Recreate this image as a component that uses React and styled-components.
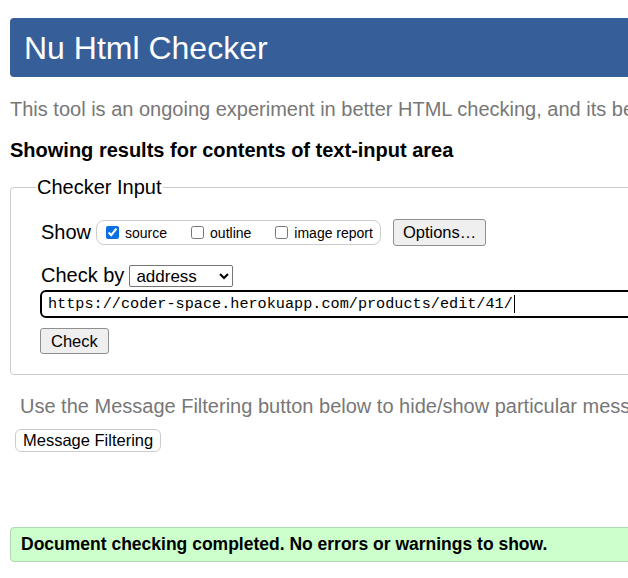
import styled, { createGlobalStyle } from 'styled-components'

const Global = createGlobalStyle`
  html, body {
    margin: 0;
    padding: 0;
    overflow: hidden;
    background: #fff;
  }
  body {
    font-family: "Liberation Sans", Arial, sans-serif;
    color: #000;
  }
`

function App() {
  return (
    <Page>
      <Global />
      <Header>
        <Title>Nu Html Checker</Title>
      </Header>

      <Intro>
        This tool is an ongoing experiment in better HTML checking, and its behavior remains subject to change
      </Intro>

      <Heading>Showing results for contents of text-input area</Heading>

      <Fieldset>
        <Legend>Checker Input</Legend>

        <Row>
          <RowLabel>Show</RowLabel>
          <CheckGroup>
            <CheckItem>
              <input type="checkbox" defaultChecked /> source
            </CheckItem>
            <CheckItem>
              <input type="checkbox" /> outline
            </CheckItem>
            <CheckItem>
              <input type="checkbox" /> image report
            </CheckItem>
          </CheckGroup>
          <Button>Options…</Button>
        </Row>

        <Row $top={18}>
          <RowLabel>Check by</RowLabel>
          <Select defaultValue="address">
            <option value="address">address</option>
            <option value="file">file upload</option>
            <option value="text">text input</option>
          </Select>
        </Row>

        <UrlField>
          https://coder-space.herokuapp.com/products/edit/41/
          <Caret />
        </UrlField>

        <CheckButton>Check</CheckButton>
      </Fieldset>

      <Note>
        Use the Message Filtering button below to hide/show particular messages, and to see total counts of errors and warnings.
      </Note>

      <FilterButton>Message Filtering</FilterButton>

      <Success>Document checking completed. No errors or warnings to show.</Success>
    </Page>
  )
}

const Page = styled.div`
  width: 1100px;
  padding: 18px 0 0 10px;
`

const Header = styled.div`
  height: 59px;
  display: flex;
  align-items: center;
  padding-left: 14px;
  background-color: #365e99;
  border-radius: 4px;
`

const Title = styled.h1`
  margin: 0;
  font-size: 32px;
  font-weight: normal;
  color: #fff;
  line-height: 1;
`

const Intro = styled.p`
  margin: 21px 0 0;
  font-size: 20px;
  line-height: 23px;
  color: #777;
  white-space: nowrap;
`

const Heading = styled.h2`
  margin: 18px 0 0;
  font-size: 20px;
  line-height: 23px;
  font-weight: bold;
`

const Fieldset = styled.fieldset`
  margin: 14px 0 0;
  padding: 21px 0 20px 30px;
  border: 1px solid #ccc;
  border-radius: 4px;
`

const Legend = styled.legend`
  margin-left: -5px;
  padding: 0 1px;
  font-size: 20px;
  line-height: 22px;
`

const Row = styled.div`
  display: flex;
  align-items: center;
  margin-top: ${p => p.$top || 0}px;
`

const RowLabel = styled.span`
  font-size: 20px;
  line-height: 23px;
  margin-right: 5px;
`

const CheckGroup = styled.div`
  display: flex;
  align-items: center;
  gap: 20px;
  height: 23px;
  padding: 0 7px 0 5px;
  border: 1px solid #ccc;
  border-radius: 8px;
  margin-right: 12px;
`

const CheckItem = styled.label`
  display: flex;
  align-items: center;
  font-size: 14px;
  gap: 3px;

  input {
    margin: 0 3px 0 4px;
    width: 13px;
    height: 13px;
    accent-color: #0a6fe0;
  }
`

const Button = styled.button`
  height: 27px;
  padding: 0 9px;
  font-family: "Liberation Sans", Arial, sans-serif;
  font-size: 16.5px;
  color: #000;
  background: #efefef;
  border: 1px solid #8f8f8f;
  border-radius: 3px;
`

const Select = styled.select`
  width: 104px;
  height: 22px;
  font-family: "Liberation Sans", Arial, sans-serif;
  font-size: 17px;
  color: #000;
  background: #fff;
  border: 1px solid #767676;
  border-radius: 2px;
  padding: 0 2px;
`

const UrlField = styled.div`
  display: flex;
  align-items: center;
  height: 24px;
  margin: 3px 0 0 -1px;
  padding-left: 6px;
  border: 2px solid #000;
  border-radius: 6px;
  font-family: "Liberation Mono", "DejaVu Sans Mono", monospace;
  font-size: 15.2px;
  white-space: nowrap;
`

const Caret = styled.span`
  display: inline-block;
  width: 1px;
  height: 18px;
  margin-left: 1px;
  background: #000;
`

const CheckButton = styled(Button)`
  display: block;
  height: 26px;
  margin: 10px 0 0 -1px;
  padding: 0 10px;
`

const Note = styled.p`
  margin: 20px 0 0 10px;
  font-size: 20px;
  line-height: 23px;
  color: #777;
  white-space: nowrap;
`

const FilterButton = styled.button`
  display: block;
  height: 23px;
  margin: 11px 0 0 5px;
  padding: 0 7px;
  font-family: "Liberation Sans", Arial, sans-serif;
  font-size: 16.5px;
  color: #000;
  background: #fff;
  border: 1px solid #ccc;
  border-radius: 6px;
`

const Success = styled.div`
  display: flex;
  align-items: center;
  height: 33px;
  margin-top: 75px;
  padding-left: 10px;
  background: #ccffcc;
  border: 1px solid #b0d8b0;
  border-radius: 4px;
  font-size: 17.5px;
  font-weight: bold;
`

export default App
